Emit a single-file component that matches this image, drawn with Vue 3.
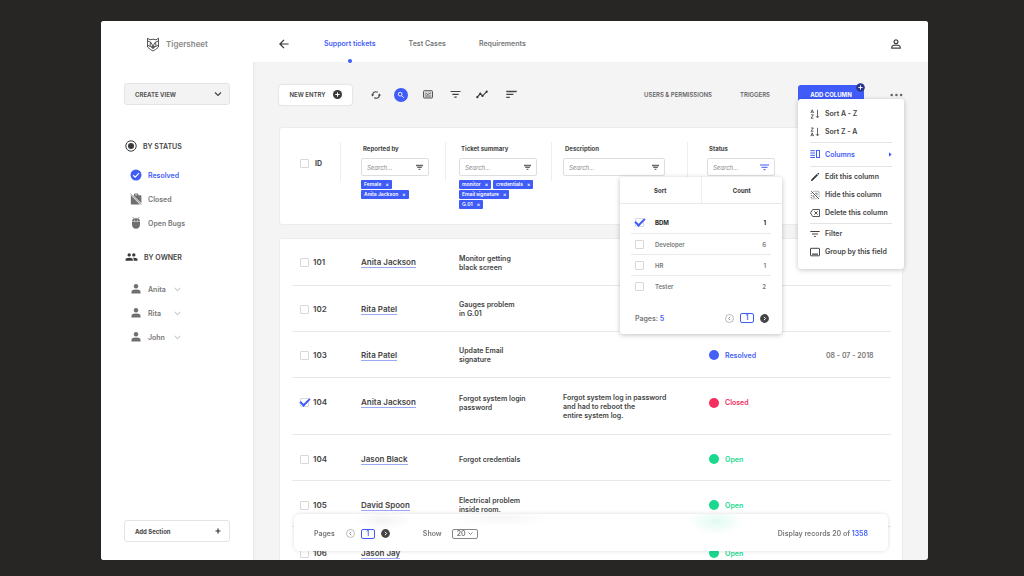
<script setup>
import { ref } from 'vue'

const statuses = [
  { label: 'Resolved', icon: 'check', active: true },
  { label: 'Closed', icon: 'closed' },
  { label: 'Open Bugs', icon: 'bug' },
]
const owners = ['Anita', 'Rita', 'John']

const rows = ref([
  { id: '101', name: 'Anita Jackson', summary: ['Monitor getting', 'black screen'] },
  { id: '102', name: 'Rita Patel', summary: ['Gauges problem', 'in G.01'] },
  { id: '103', name: 'Rita Patel', summary: ['Update Email', 'signature'], status: 'Resolved', date: '08 - 07 - 2018' },
  { id: '104', name: 'Anita Jackson', checked: true, tall: true, summary: ['Forgot system login', 'password'], description: ['Forgot system log in password', 'and had to reboot the', 'entire system log.'], status: 'Closed' },
  { id: '104', name: 'Jason Black', summary: ['Forgot credentials'], status: 'Open' },
  { id: '105', name: 'David Spoon', summary: ['Electrical problem', 'inside room.'], status: 'Open' },
  { id: '106', name: 'Jason Jay', last: true, summary: [], status: 'Open' },
])

const filters = [
  { key: 'reporter', label: 'Reported by', tags: [['Female'], ['Anita Jackson']] },
  { key: 'summary', label: 'Ticket summary', tags: [['monitor', 'credentials'], ['Email signature'], ['G.01']] },
  { key: 'description', label: 'Description', tags: [] },
  { key: 'status', label: 'Status', tags: [], open: true },
]

const options = ref([
  { label: 'BDM', count: 1, checked: true },
  { label: 'Developer', count: 6 },
  { label: 'HR', count: 1 },
  { label: 'Tester', count: 2 },
])
</script>

<template>
  <div class="page">
    <div class="window">
      <aside class="sidebar">
        <a class="brand" href="#">
          <svg width="14" height="15" viewBox="0 0 14 15" fill="none" stroke="#555" stroke-width="1">
            <path d="M1.500 1.200 4 2.800Q7 1.600 10 2.800L12.500 1.200 12.500 10 9.500 12.500 7 14 4.500 12.500 1.500 10Z" />
            <path d="M1.500 4 4.500 5 7 9 9.500 5 12.500 4M4.500 5 4 9 7 11.500 10 9 9.500 5M1.500 8 4 9.500M12.500 8 10 9.500" />
            <path d="M5.500 9.300h3L7 11.300Z" fill="#444" />
          </svg>
          <span>Tigersheet</span>
        </a>
        <button class="side-btn create" type="button">
          <span>CREATE VIEW</span>
          <svg width="8" height="8" viewBox="0 0 8 8" fill="none" stroke="#444" stroke-width="1.200"><path d="M1 2.500 4 5.500 7 2.500" /></svg>
        </button>

        <h2 class="group">
          <svg width="12" height="12" viewBox="0 0 12 12"><circle cx="6" cy="6" r="5.200" fill="none" stroke="#3a3a3a" /><circle cx="6" cy="6" r="3" fill="#3a3a3a" /></svg>
          BY STATUS
        </h2>
        <ul class="list">
          <li v-for="s in statuses" :key="s.label">
            <a href="#" :class="{ active: s.active }">
              <svg v-if="s.icon === 'check'" width="12" height="12" viewBox="0 0 12 12"><circle cx="6" cy="6" r="5.500" fill="#3f5cf8" /><path d="M3.200 6.200 5.200 8.100 9 4.200" fill="none" stroke="#fff" stroke-width="1.200" /></svg>
              <svg v-else-if="s.icon === 'closed'" width="12" height="12" viewBox="0 0 12 12" fill="#6f6f6f"><path d="M3.200 2.300H4V1.400Q4 .4 5 .4H7.400Q8.400.4 8.400 1.400V2.300H10.500Q11.400 2.300 11.400 3.200V10.200ZM5.100 2.300H7.300V1.500H5.100Z" fill-rule="evenodd" /><path d="M.8 2.300 10 11.400H1.700Q.8 11.400.8 10.500Z" /><path d="M.4.800 11.500 11.700" stroke="#6f6f6f" stroke-width=".8" /></svg>
              <svg v-else width="12" height="12" viewBox="0 0 12 12" fill="#6f6f6f"><path d="M2 4.500Q2 1.300 6 1.300T10 4.500ZM2 5.100H10V7.700Q9.500 11.800 6 11.800T2 7.700Z" /><path d="M3 .2 4.200 1.800M9 .2 7.800 1.800" stroke="#6f6f6f" stroke-width=".8" /><circle cx="4.500" cy="3.200" r=".5" fill="#fff" /><circle cx="7.500" cy="3.200" r=".5" fill="#fff" /></svg>
              {{ s.label }}
            </a>
          </li>
        </ul>

        <h2 class="group owner">
          <svg width="13" height="12" viewBox="0 0 13 12" fill="#3a3a3a"><circle cx="4.200" cy="3.900" r="1.700" /><circle cx="8.800" cy="3.900" r="1.700" /><path d="M.5 9.800V8.500Q.5 6.700 4.200 6.700T7.800 8.500V9.800ZM8.700 9.800V8.400Q8.700 7.500 8 6.800 12.500 6.500 12.500 8.500V9.800Z" /></svg>
          BY OWNER
        </h2>
        <ul class="list owners">
          <li v-for="o in owners" :key="o">
            <a href="#">
              <svg width="12" height="12" viewBox="0 0 12 12" fill="#6f6f6f"><circle cx="6" cy="3.200" r="2.200" /><path d="M1.500 10.500V9Q1.500 6.600 6 6.600T10.500 9V10.500Z" /></svg>
              <span>{{ o }}</span>
              <svg width="7" height="6" viewBox="0 0 7 6" fill="none" stroke="#aaa" stroke-width=".9"><path d="M.7 2 3.500 4.700 6.300 2" /></svg>
            </a>
          </li>
        </ul>

        <button class="side-btn add" type="button">
          <span>Add Section</span>
          <svg width="8" height="8" viewBox="0 0 8 8" stroke="#333" stroke-width="1.200"><path d="M4 1.500V6.500M1.500 4H6.500" /></svg>
        </button>
      </aside>

      <main class="main">
        <header class="topbar">
          <button class="plain" type="button" aria-label="Back">
            <svg width="10" height="10" viewBox="0 0 10 10" fill="none" stroke="#333" stroke-width="1.200"><path d="M5 .8.900 5 5 9.200M1 5H9.600" /></svg>
          </button>
          <nav>
            <a href="#" class="active">Support tickets</a>
            <a href="#">Test Cases</a>
            <a href="#">Requirements</a>
          </nav>
          <button class="plain user" type="button" aria-label="Account">
            <svg width="10" height="10" viewBox="0 0 10 10" fill="none" stroke="#444" stroke-width="1.200"><circle cx="5" cy="2.700" r="1.900" /><path d="M.8 9.200V8Q.8 6.100 5 6.100T9.200 8V9.200Z" /></svg>
          </button>
        </header>

        <section class="toolbar">
          <button class="new-entry" type="button">
            NEW ENTRY
            <svg width="9" height="9" viewBox="0 0 9 9"><circle cx="4.500" cy="4.500" r="4.500" fill="#3a3a3a" /><path d="M4.500 2.300V6.700M2.300 4.500H6.700" stroke="#fff" /></svg>
          </button>
          <div class="tools">
            <button class="plain small" type="button" aria-label="Refresh">
              <svg width="10" height="10" viewBox="0 0 10 10" fill="none" stroke="#444" stroke-width="1.100"><path d="M1.600 5.200Q1.400 3.200 3 2.200 4.800 1.200 6.800 2.200M8.400 4.800Q8.600 6.800 7 7.800 5.200 8.800 3.200 7.800" /><path d="M0 4.600H3.200L1.600 6.500ZM6.800 5.400H10L8.400 3.500Z" fill="#444" stroke="none" /></svg>
            </button>
            <button class="plain search-on" type="button" aria-label="Search">
              <svg width="8" height="8" viewBox="0 0 8 8" fill="none" stroke="#fff" stroke-width=".9"><circle cx="3.200" cy="3.200" r="1.900" /><path d="M4.600 4.600 6.800 6.800" /></svg>
            </button>
            <button class="plain" type="button" aria-label="Card view">
              <svg width="10" height="9" viewBox="0 0 10 9" fill="none" stroke="#555"><rect x=".5" y=".7" width="9" height="7.300" rx=".8" fill="#d8d8d8" /><path d="M2 6H8M2 4.500 3.500 3.300 4.500 4.500 8 2.800" stroke-width=".8" /></svg>
            </button>
            <button class="plain" type="button" aria-label="Filter">
              <svg width="11" height="9" viewBox="0 0 11 9" stroke="#444" stroke-width="1.200"><path d="M.5 1.500H10.500M2.300 4.300H8.700M4.300 7.200H6.700" /></svg>
            </button>
            <button class="plain" type="button" aria-label="Chart">
              <svg width="12" height="9" viewBox="0 0 12 9" fill="none" stroke="#333" stroke-width="1.100"><path d="M1.200 7.200 4.200 3.800 6.500 5.800 10.800 1.600" /><g fill="#333" stroke="none"><circle cx="1.300" cy="7.200" r="1.100" /><circle cx="4.300" cy="3.700" r="1.100" /><circle cx="6.500" cy="5.900" r="1.100" /><circle cx="10.700" cy="1.700" r="1.100" /></g></svg>
            </button>
            <button class="plain wide" type="button" aria-label="Sort">
              <svg width="11" height="9" viewBox="0 0 11 9" stroke="#444" stroke-width="1.300"><path d="M.3 1.500H10.700M.3 4.400H7.400M.3 7.300H3.800" /></svg>
            </button>
          </div>
          <div class="actions">
            <a href="#">USERS &amp; PERMISSIONS</a>
            <a href="#">TRIGGERS</a>
            <div class="add-column">
              <button class="add-btn" type="button">ADD COLUMN</button>
              <span class="plus"><svg width="9" height="9" viewBox="0 0 9 9"><circle cx="4.500" cy="4.500" r="4.300" fill="#26348c" /><path d="M4.500 2.300V6.700M2.300 4.500H6.700" stroke="#fff" stroke-width=".9" /></svg></span>
              <div class="menu">
                <button type="button">
                  <svg width="10" height="10" viewBox="0 0 10 10" fill="none" stroke="#555" stroke-width=".9"><path d="M.8 4 2.200.8 3.600 4M1.300 3H3.100M1 5.800H3.400L1 9.200H3.500M7.500.8V8.800M6 7.200 7.500 8.800 9 7.200" /></svg>
                  Sort A - Z
                </button>
                <button type="button">
                  <svg width="10" height="10" viewBox="0 0 10 10" fill="none" stroke="#555" stroke-width=".9"><path d="M1 1H3.400L1 4.200H3.500M.8 9.200 2.200 5.800 3.600 9.200M1.300 8.200H3.100M7.500.8V8.800M6 7.200 7.500 8.800 9 7.200" /></svg>
                  Sort Z - A
                </button>
                <hr />
                <button type="button" class="active tall">
                  <svg width="10" height="10" viewBox="0 0 10 10" fill="none" stroke="#3f5cf8"><path d="M.3 1.700H5M.3 4H5M.3 6.300H5M.3 8.500H5" /><rect x="6.500" y="1.500" width="3" height="7" /></svg>
                  Columns
                  <svg class="caret" width="3" height="5" viewBox="0 0 3 5" fill="#3f5cf8"><path d="M0 .3 2.700 2.500 0 4.700Z" /></svg>
                </button>
                <hr />
                <button type="button">
                  <svg width="10" height="10" viewBox="0 0 10 10" fill="#333"><path d="M1 9 1.300 7.500 6.800 2 8 3.200 2.500 8.700ZM7.200 1.600 7.900.9Q8.200.6 8.500.9L9.100 1.500Q9.400 1.800 9.100 2.100L8.400 2.800Z" /></svg>
                  Edit this column
                </button>
                <button type="button">
                  <svg width="10" height="10" viewBox="0 0 10 10" fill="none" stroke="#555" stroke-width=".8"><path d="M1.200 1.200 9 9" stroke="#333" /><path d="M3.500 1.300H9V7M1.300 3V8.800H7" stroke-dasharray="1 1" /><path d="M5 3.300H7V5.500M3.200 5V7H5" stroke-width=".7" /></svg>
                  Hide this column
                </button>
                <button type="button">
                  <svg width="10" height="10" viewBox="0 0 10 10" fill="none" stroke="#444" stroke-width=".9"><path d="M2.700 1.500H9.500V8.500H2.700L.5 5ZM4.300 3.300 7.700 6.700M7.700 3.300 4.300 6.700" /></svg>
                  Delete this column
                </button>
                <hr />
                <button type="button">
                  <svg width="10" height="10" viewBox="0 0 10 10" stroke="#444"><path d="M.3 2.500H9.700M2 5H8M4.200 7.500H5.800" /></svg>
                  Filter
                </button>
                <button type="button">
                  <svg width="10" height="10" viewBox="0 0 10 10" fill="none" stroke="#444"><rect x=".5" y="1.300" width="9" height="7.500" rx=".4" /><path d="M2 7.200H8" stroke-width="1.300" /></svg>
                  Group by this field
                </button>
              </div>
            </div>
            <button class="plain more" type="button" aria-label="More">
              <svg width="13" height="4" viewBox="0 0 13 4" fill="#666"><circle cx="1.700" cy="2" r="1.300" /><circle cx="6.400" cy="2" r="1.300" /><circle cx="11.100" cy="2" r="1.300" /></svg>
            </button>
          </div>
        </section>

        <section class="card head-card">
          <table>
            <colgroup><col class="c-id" /><col class="c-name" /><col class="c-sum" /><col class="c-desc" /><col class="c-status" /><col class="c-date" /></colgroup>
            <thead>
              <tr>
                <th class="id-head">
                  <label class="check"><input type="checkbox" />ID</label>
                </th>
                <th v-for="f in filters" :key="f.key" class="filter" :class="f.key">
                  <label :for="'f-' + f.key">{{ f.label }}</label>
                  <div class="field">
                    <input :id="'f-' + f.key" type="text" placeholder="Search..." />
                    <svg v-if="f.open" width="9" height="7" viewBox="0 0 9 7" stroke="#3f5cf8"><path d="M0 1H9M1.500 3.300H7.500M3.500 5.700H5.500" /></svg>
                    <svg v-else width="7" height="7" viewBox="0 0 7 7" stroke="#666" stroke-width="1.300"><path d="M0 1.500H7M1.200 3.400H5.800M2.600 5.300H4.400" /></svg>

                    <div v-if="f.open" class="popover">
                      <div class="tabs">
                        <button type="button">Sort</button>
                        <button type="button">Count</button>
                      </div>
                      <ul class="opts">
                        <li v-for="o in options" :key="o.label" :class="{ on: o.checked }">
                          <label class="check"><input v-model="o.checked" type="checkbox" />{{ o.label }}</label>
                          <span>{{ o.count }}</span>
                        </li>
                      </ul>
                      <div class="pop-foot">
                        <span>Pages: <b>5</b></span>
                        <div class="pager">
                          <button class="plain" type="button" aria-label="Previous page"><svg width="9" height="9" viewBox="0 0 9 9" fill="none" stroke="#aaa" stroke-width=".8"><circle cx="4.500" cy="4.500" r="4" /><path d="M5.100 2.900 3.600 4.500 5.100 6.100" stroke="#777" /></svg></button>
                          <button class="num" type="button">1</button>
                          <button class="plain" type="button" aria-label="Next page"><svg width="9" height="9" viewBox="0 0 9 9"><circle cx="4.500" cy="4.500" r="4.400" fill="#444" /><path d="M3.900 2.800 5.600 4.500 3.900 6.200" fill="none" stroke="#fff" /></svg></button>
                        </div>
                      </div>
                    </div>
                  </div>
                  <div v-if="f.tags.length" class="tags">
                    <div v-for="(line, i) in f.tags" :key="i">
                      <button v-for="t in line" :key="t" type="button">{{ t }}<i>×</i></button>
                    </div>
                  </div>
                </th>
                <td class="filter date"></td>
              </tr>
            </thead>
          </table>
        </section>

        <section class="card body-card">
          <table>
            <colgroup><col class="c-id" /><col class="c-name" /><col class="c-sum" /><col class="c-desc" /><col class="c-status" /><col class="c-date" /></colgroup>
            <tbody>
              <tr v-for="(r, i) in rows" :key="i" :class="{ tall: r.tall, last: r.last }">
                <td class="id-cell"><label class="check"><input v-model="r.checked" type="checkbox" />{{ r.id }}</label></td>
                <td class="name"><a href="#">{{ r.name }}</a></td>
                <td class="summary"><div v-for="l in r.summary" :key="l">{{ l }}</div></td>
                <td class="description"><div v-for="l in r.description" :key="l">{{ l }}</div></td>
                <td class="status"><span v-if="r.status" class="state" :class="r.status.toLowerCase()">{{ r.status }}</span></td>
                <td class="date">{{ r.date }}</td>
              </tr>
            </tbody>
          </table>
        </section>

        <footer class="bottom">
          <span>Pages</span>
          <div class="pager">
            <button class="plain" type="button" aria-label="Previous page"><svg width="9" height="9" viewBox="0 0 9 9" fill="none" stroke="#aaa" stroke-width=".8"><circle cx="4.500" cy="4.500" r="4" /><path d="M5.100 2.900 3.600 4.500 5.100 6.100" stroke="#777" /></svg></button>
            <button class="num" type="button">1</button>
            <button class="plain" type="button" aria-label="Next page"><svg width="9" height="9" viewBox="0 0 9 9"><circle cx="4.500" cy="4.500" r="4.400" fill="#444" /><path d="M3.900 2.800 5.600 4.500 3.900 6.200" fill="none" stroke="#fff" /></svg></button>
          </div>
          <label for="per-page">Show</label>
          <div class="select">
            <select id="per-page"><option>20</option></select>
            <svg width="5" height="5" viewBox="0 0 5 5" fill="none" stroke="#777" stroke-width=".9"><path d="M.5 1.500 2.500 3.500 4.500 1.500" /></svg>
          </div>
          <span class="records">Display records 20 of <b>1358</b></span>
        </footer>
      </main>
    </div>
  </div>
</template>

<style>
body {
  background: #282625;
}
</style>

<style scoped>
.page {
  box-sizing: border-box;
  height: 100vh;
  padding: 21px 96px 16px 101px;
  background: #282625;
  font-family: Inter, "Liberation Sans", sans-serif;
  font-size: 7px;
  font-weight: 600;
  line-height: 9px;
  color: #444;
}
.page * {
  box-sizing: border-box;
}
.window {
  display: flex;
  height: 100%;
  overflow: hidden;
  border-radius: 3px;
  background: #f4f4f4;
}
button,
input,
select {
  margin: 0;
  padding: 0;
  font: inherit;
  color: inherit;
  border: 0;
  background: none;
}
svg {
  display: block;
  flex: none;
}
a {
  color: inherit;
  text-decoration: none;
}
ul {
  list-style: none;
  margin: 0;
  padding: 0;
}
.plain {
  display: flex;
  align-items: center;
  justify-content: center;
}

/* sidebar */
.sidebar {
  display: flex;
  flex-direction: column;
  width: 152px;
  flex: none;
  padding: 0 23px 18px;
  background: #fff;
  box-shadow: 0 0 3px #0000001a;
}
.brand {
  display: flex;
  align-items: center;
  justify-content: center;
  gap: 6px;
  height: 46px;
  font-size: 8px;
  color: #888;
}
.side-btn {
  display: flex;
  align-items: center;
  justify-content: space-between;
  padding: 0 7px 0 10px;
  border: 1px solid #e4e4e4;
  border-radius: 3px;
  height: 22px;
  font-size: 6px;
  font-weight: 700;
}
.create {
  margin-top: 16px;
  background: #f3f3f3;
  color: #555;
}
.add {
  margin-top: auto;
}
.group {
  display: flex;
  align-items: center;
  gap: 6px;
  height: 24px;
  margin: 29px 0 0 1px;
  font-size: 7px;
  font-weight: 600;
}
.group.owner {
  margin-top: 10px;
}
.list {
  margin-top: 5px;
  padding-left: 6px;
  color: #777;
}
.list.owners {
  margin-top: 8px;
}
.list a {
  display: flex;
  align-items: center;
  gap: 6px;
  height: 24px;
}
.list span {
  width: 20px;
}
.list .active,
.active {
  color: #3f5cf8;
}

/* main */
.main {
  position: relative;
  flex: 1;
  min-width: 0;
  padding-bottom: 12px;
}
.topbar {
  display: flex;
  align-items: center;
  height: 41px;
  padding: 4px 27px 0 26px;
  background: #fff;
}
.topbar nav {
  display: flex;
  gap: 33px;
  margin-left: 35px;
  color: #777;
}
.topbar nav a {
  position: relative;
}
.topbar nav .active {
  color: #3f5cf8;
}
.topbar nav .active::after {
  content: "";
  position: absolute;
  left: 50%;
  top: 20px;
  width: 4px;
  height: 4px;
  margin-left: -2px;
  border-radius: 50%;
  background: #3f5cf8;
}
.user {
  margin-left: auto;
}
.toolbar {
  display: flex;
  align-items: center;
  height: 65px;
  padding: 0 25px 0 26px;
}
.new-entry {
  display: flex;
  align-items: center;
  justify-content: center;
  gap: 7px;
  width: 73px;
  height: 20px;
  border-radius: 3px;
  background: #fff;
  box-shadow: 0 0 2px #0003;
  font-size: 6px;
  white-space: nowrap;
}
.tools {
  display: flex;
  gap: 13px;
  margin-left: 19px;
}
.tools .plain {
  width: 14px;
  height: 14px;
}
.tools .small {
  width: 10px;
}
.tools .wide {
  width: 18px;
}
.tools .search-on {
  border-radius: 50%;
  background: #3f5cf8;
}
.actions {
  display: flex;
  align-items: center;
  gap: 28px;
  margin-left: auto;
  font-size: 6px;
  color: #666;
  white-space: nowrap;
}
.add-column {
  position: relative;
}
.add-btn {
  display: block;
  width: 66px;
  height: 20px;
  border-radius: 3px;
  background: #3f5cf8;
  color: #fff;
  font-weight: 700;
}
.plus {
  position: absolute;
  right: -1px;
  top: -2px;
}
.more {
  margin-left: -2px;
}
.menu {
  position: absolute;
  z-index: 20;
  top: 14px;
  left: 0;
  width: 106px;
  padding: 6px 12px 8px;
  border-radius: 3px;
  background: #fff;
  box-shadow: 0 1px 5px #0000003a;
  font-size: 7px;
  color: #444;
}
.menu button {
  display: flex;
  align-items: center;
  gap: 5px;
  width: 100%;
  height: 18px;
}
.menu .tall {
  height: 21px;
}
.menu .caret {
  margin-left: auto;
}
.menu .active {
  color: #3f5cf8;
}
.menu hr {
  margin: 1px 0;
  border: 0;
  border-top: 1px solid #e4e4e4;
}

/* tables */
.card {
  margin: 0 25px 0 26px;
  padding: 0 11px 0 12px;
  border: 1px solid #ececec;
  border-radius: 3px;
  background: #fff;
}
.head-card {
  min-height: 98px;
}
.body-card {
  margin-top: 13px;
}
table {
  width: 100%;
  table-layout: fixed;
  border-collapse: collapse;
}
th,
td {
  padding: 0;
  text-align: left;
  font-weight: inherit;
}
.c-id {
  width: 48px;
}
.c-name {
  width: 105px;
}
.c-sum {
  width: 106px;
}
.c-status {
  width: 118px;
}
.c-date {
  width: 86px;
}
.check {
  display: flex;
  align-items: center;
  gap: 5px;
}
.check input {
  appearance: none;
  display: flex;
  align-items: center;
  justify-content: center;
  flex: none;
  width: 9px;
  height: 9px;
  border: 1px solid #d8d8d8;
  border-radius: 1px;
  background: #fff;
}
.check input:checked::after {
  content: "";
  flex: none;
  width: 8px;
  height: 4px;
  margin-bottom: 3px;
  border: solid #3f5cf8;
  border-width: 0 0 2px 2px;
  transform: rotate(-45deg);
}
.filter {
  padding-top: 16px;
  vertical-align: top;
  background: linear-gradient(#eee, #eee) 0 14px / 1px 39px no-repeat;
}
.filter > label {
  display: block;
  padding-left: 2px;
  font-size: 6px;
  font-weight: 700;
}
.id-head {
  padding: 31px 0 0 8px;
  vertical-align: top;
  font-weight: 700;
}
.id-head .check {
  gap: 6px;
}
.reporter,
.name {
  padding-left: 21px;
}
.reporter {
  padding-right: 16px;
}
.filter.summary,
.summary {
  padding-left: 14px;
}
.filter.summary {
  padding-right: 14px;
}
.description {
  padding-left: 12px;
}
.filter.description {
  padding-right: 22px;
}
.status {
  padding-left: 22px;
}
.filter.status {
  padding-left: 20px;
  padding-right: 30px;
}
.field {
  position: relative;
  display: flex;
  align-items: center;
  height: 18px;
  margin-top: 5px;
  padding: 0 5px;
  border: 1px solid #dedede;
  border-radius: 2px;
}
.field > input {
  flex: 1;
  min-width: 0;
  font-size: 6px;
  font-weight: 400;
  font-style: italic;
  outline: 0;
}
.field > input::placeholder {
  color: #888;
}
.tags {
  display: grid;
  gap: 1px;
  margin-top: 4px;
}
.tags div {
  display: flex;
  gap: 2px;
}
.tags button {
  display: flex;
  height: 9px;
  padding: 0 3px;
  gap: 4px;
  border-radius: 1px;
  background: #3f5cf8;
  color: #fff;
  font-size: 5px;
  line-height: 9px;
  white-space: nowrap;
}
.tags i {
  font-style: normal;
}

/* status filter popover */
.popover {
  position: absolute;
  z-index: 10;
  top: 18px;
  right: -8px;
  width: 162px;
  border-radius: 3px;
  background: #fff;
  box-shadow: 0 1px 5px #00000040;
}
.tabs {
  display: flex;
  height: 27px;
  border-bottom: 1px solid #e8e8e8;
  font-size: 6px;
  font-weight: 700;
  color: #333;
}
.tabs button {
  flex: 1;
}
.tabs button + button {
  border-left: 1px solid #eee;
}
.opts {
  padding: 8px 11px 0;
  font-size: 6px;
}
.opts li {
  display: flex;
  align-items: center;
  justify-content: space-between;
  height: 21px;
  padding: 0 5px 0 4px;
  color: #777;
}
.opts li + li {
  border-top: 1px solid #eaeaea;
}
.opts .on {
  font-weight: 700;
  color: #222;
}
.opts .check {
  gap: 11px;
}
.pop-foot {
  display: flex;
  align-items: center;
  justify-content: space-between;
  height: 38px;
  padding: 6px 13px 0 15px;
  color: #777;
}
b {
  font-weight: 600;
  color: #3f5cf8;
}
.pager {
  display: flex;
  align-items: center;
  gap: 6px;
}
.num {
  width: 14px;
  height: 10px;
  border: 1px solid #3f5cf8;
  border-radius: 2px;
  line-height: 8px;
  color: #3f5cf8;
}

/* rows */
.body-card td {
  height: 46px;
  padding-top: 2px;
  border-bottom: 1px solid #e8e8e8;
}
.body-card .tall td {
  height: 57px;
  padding-top: 0;
  padding-bottom: 6px;
}
.body-card .tall .description {
  padding-top: 2px;
  padding-bottom: 0;
}
.body-card .tall ~ tr td {
  padding-top: 4px;
}
.body-card .last td {
  height: 50px;
}
.body-card .id-cell {
  padding-left: 8px;
  font-size: 8px;
}
.body-card .id-cell .check {
  gap: 4px;
}
.name {
  font-size: 8px;
}
.name a {
  border-bottom: 1px solid #9aa8f5;
}
.summary,
.description {
  white-space: nowrap;
}
.state {
  display: flex;
  align-items: center;
  gap: 6px;
}
.state::before {
  content: "";
  width: 10px;
  height: 10px;
  border-radius: 50%;
  background: currentColor;
}
.resolved {
  color: #4560f7;
}
.closed {
  color: #f72c5f;
}
.open {
  color: #1ad98f;
}
.body-card .date {
  padding-left: 21px;
  color: #777;
  white-space: nowrap;
}

/* floating footer */
.bottom {
  position: absolute;
  left: 41px;
  right: 40px;
  bottom: 9px;
  display: flex;
  align-items: center;
  height: 37px;
  padding: 2px 20px 0;
  border-radius: 6px;
  background:
    radial-gradient(28px 14px at 71% 7px, #1ad98f20, #1ad98f00),
    radial-gradient(30px 10px at 15% 6px, #0000000c, #0000),
    radial-gradient(50px 8px at 35% 4px, #0000000a, #0000),
    #fffffff0;
  backdrop-filter: blur(6px);
  box-shadow: 0 0 4px #00000024;
  color: #777;
}
.bottom .pager {
  margin-left: 11px;
}
.bottom label {
  margin-left: 33px;
}
.select {
  display: flex;
  align-items: center;
  justify-content: center;
  gap: 2px;
  width: 26px;
  height: 10px;
  margin-left: 10px;
  border: 1px solid #888;
  border-radius: 2px;
}
.select select {
  appearance: none;
  line-height: 8px;
}
.records {
  margin-left: auto;
}
</style>
